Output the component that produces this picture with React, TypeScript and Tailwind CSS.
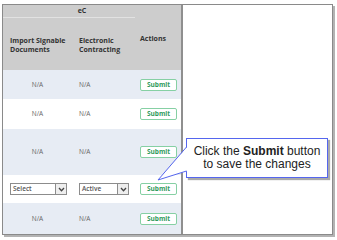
import React from "react";

const rows = [
  { h: "h-[29px]", bg: "bg-[#e7ecf4]", kind: "na" },
  { h: "h-[30px]", bg: "bg-white", kind: "na" },
  { h: "h-[46px]", bg: "bg-[#e7ecf4]", kind: "na" },
  { h: "h-[28px]", bg: "bg-white", kind: "select" },
  { h: "h-[31px]", bg: "bg-[#e7ecf4]", kind: "na" },
];

function SubmitButton() {
  return (
    <div className="ml-[5px] flex h-[12px] w-[37px] items-center justify-center rounded-[2px] border border-[#86d0a4] bg-white text-[6.5px] font-bold text-[#2f9a5c]">
      Submit
    </div>
  );
}

function FakeSelect({ label, width }: { label: string; width: string }) {
  return (
    <div className={`flex h-[12px] ${width} items-stretch border border-[#8c8c8c] bg-white`}>
      <div className="flex flex-1 items-center pl-[2px] text-[6.5px] font-semibold text-[#555]">{label}</div>
      <div className="flex w-[11px] items-center justify-center border-l border-[#8c8c8c] bg-[#eeeeee]">
        <svg width="7" height="5" viewBox="0 0 7 5">
          <path d="M1 1 L3.5 3.8 L6 1" fill="none" stroke="#444" strokeWidth="1.3" />
        </svg>
      </div>
    </div>
  );
}

export default function App() {
  return (
    <div className="relative h-[240px] w-[337px] overflow-hidden bg-white font-['Open_Sans',sans-serif]">
      <div className="ml-[2px] mt-[4px] flex h-[231px] w-[331px] border border-[#8a8a8a] shadow-[2px_2px_0_#b3b3b3]">
        {/* Table */}
        <div className="flex w-[180px] flex-col border-r-2 border-[#8f8f8f]">
          {/* Header */}
          <div className="h-[65px] bg-[#cdcdcd]">
            <div className="flex h-[13px] w-[132px] items-center justify-center border-b border-[#e2e2e2] pl-[26px] text-[7px] font-bold text-[#333]">
              eC
            </div>
            <div className="flex pt-[16px] text-[7px] font-bold leading-[9px] text-[#333]">
              <div className="w-[69px] pl-[7px] pt-[2px]">
                Import Signable
                <br />
                Documents
              </div>
              <div className="w-[63px] pl-[7px] pt-[2px]">
                Electronic
                <br />
                Contracting
              </div>
              <div className="pl-[5px]">Actions</div>
            </div>
          </div>

          {rows.map((r, i) => (
            <div key={i} className={`flex items-center ${r.h} ${r.bg}`}>
              {r.kind === "na" ? (
                <>
                  <div className="w-[69px] text-center text-[6.5px] text-[#666]">N/A</div>
                  <div className="w-[63px] pl-[7px] text-[6.5px] text-[#666]">N/A</div>
                </>
              ) : (
                <>
                  <div className="w-[69px] pl-[7px]">
                    <FakeSelect label="Select" width="w-[57px]" />
                  </div>
                  <div className="w-[63px] pl-[7px]">
                    <FakeSelect label="Active" width="w-[50px]" />
                  </div>
                </>
              )}
              <SubmitButton />
            </div>
          ))}
        </div>
        <div className="flex-1" />
      </div>

      {/* Callout */}
      <div className="absolute left-[186px] top-[138px] flex h-[40px] w-[142px] flex-col items-center justify-center border border-[#5566ee] bg-white font-['Liberation_Sans',sans-serif] text-[12px] leading-[13px] text-[#222] shadow-[2px_2px_1px_#aaaaaa]">
        <div>
          Click the <b>Submit</b> button
        </div>
        <div>to save the changes</div>
      </div>
      <svg className="pointer-events-none absolute left-0 top-0" width="337" height="240">
        <polygon points="187,147 158,180 187,171" fill="white" />
        <polyline points="186.5,147 158,180 186.5,171" fill="none" stroke="#5566ee" strokeWidth="1" />
      </svg>
    </div>
  );
}
